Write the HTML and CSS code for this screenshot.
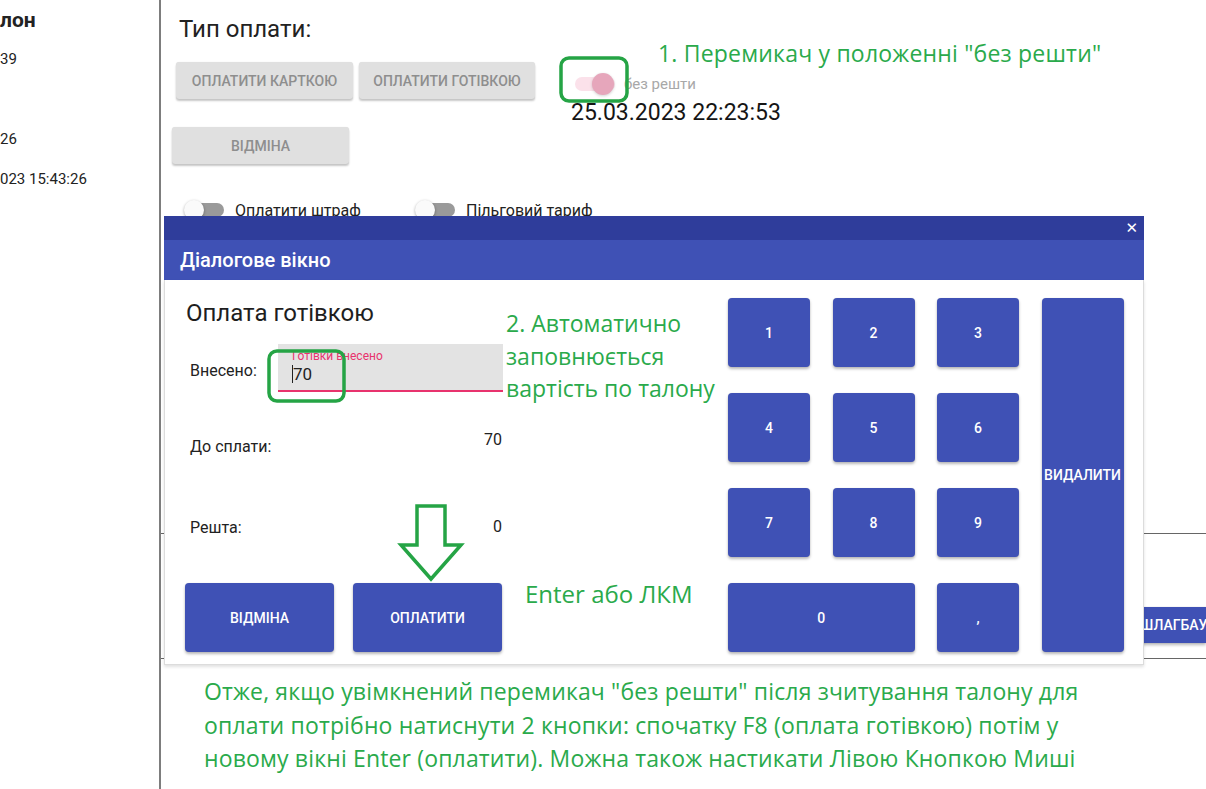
FILE: index.html
```html
<!DOCTYPE html>
<html lang="uk">
<head>
<meta charset="utf-8">
<title>Оплата готівкою</title>
<link rel="stylesheet" href="styles.css">
</head>
<body>
<div class="page">
  <aside class="sidebar">
    <div class="sb-head">лон</div>
    <div class="sb-item first">39</div>
    <div class="sb-item second">26</div>
    <div class="sb-item third">023 15:43:26</div>
  </aside>
  <main class="main">
    <h1 class="title">Тип оплати:</h1>
    <div class="pay-row">
      <button class="btn-gray card">Оплатити карткою</button>
      <button class="btn-gray cash">Оплатити готівкою</button>
      <div class="change-box">
        <div class="switch-row">
          <span class="switch on"><span class="track"></span><span class="thumb"></span></span>
          <span class="switch-label">без решти</span>
        </div>
        <div class="datetime">25.03.2023 22:23:53</div>
      </div>
    </div>
    <button class="btn-gray cancel">Відміна</button>
    <div class="toggles">
      <label class="toggle-item fine">
        <span class="switch"><span class="track"></span><span class="thumb"></span></span>
        <span class="toggle-text">Оплатити штраф</span>
      </label>
      <label class="toggle-item">
        <span class="switch"><span class="track"></span><span class="thumb"></span></span>
        <span class="toggle-text">Пільговий тариф</span>
      </label>
    </div>
    <div class="barrier">
      <button class="btn-blue barrier-btn">ШЛАГБАУ</button>
    </div>
  </main>
</div>

<div class="dialog">
  <div class="dialog-top"><span class="close">✕</span></div>
  <div class="dialog-header">Діалогове вікно</div>
  <div class="dialog-body">
    <div class="pay-col">
      <div class="pay-title">Оплата готівкою</div>
      <div class="field-row">
        <span class="row-label">Внесено:</span>
        <div class="field">
          <span class="field-label">Готівки внесено</span>
          <span class="field-value"><span class="caret"></span>70</span>
        </div>
      </div>
      <div class="amount-row due">
        <span class="row-label">До сплати:</span>
        <span class="amount">70</span>
      </div>
      <div class="amount-row rest">
        <span class="row-label">Решта:</span>
        <span class="amount">0</span>
      </div>
      <div class="action-row">
        <button class="btn-blue action">Відміна</button>
        <button class="btn-blue action">Оплатити</button>
      </div>
    </div>
    <div class="keypad">
      <button class="btn-blue key">1</button>
      <button class="btn-blue key">2</button>
      <button class="btn-blue key">3</button>
      <button class="btn-blue key del">ВИДАЛИТИ</button>
      <button class="btn-blue key">4</button>
      <button class="btn-blue key">5</button>
      <button class="btn-blue key">6</button>
      <button class="btn-blue key">7</button>
      <button class="btn-blue key">8</button>
      <button class="btn-blue key">9</button>
      <button class="btn-blue key zero">0</button>
      <button class="btn-blue key">,</button>
    </div>
  </div>
</div>

<svg class="marks" width="1206" height="789" viewBox="0 0 1206 789" aria-hidden="true">
  <rect x="561" y="58" width="66" height="43" rx="8" ry="8"/>
  <rect x="269" y="351" width="75" height="50" rx="8" ry="8"/>
  <path d="M417 506 H445 V545 H461 L431 579 L401 545 H417 Z"/>
</svg>

<div class="note note-1">1. Перемикач у положенні "без решти"</div>
<div class="note note-2">2. Автоматично<br>заповнюється<br>вартість по талону</div>
<div class="note note-3">Enter або ЛКМ</div>
<div class="note note-4">Отже, якщо увімкнений перемикач "без решти" після зчитування талону для<br>оплати потрібно натиснути 2 кнопки: спочатку F8 (оплата готівкою) потім у<br>новому вікні Enter (оплатити). Можна також настикати Лівою Кнопкою Миші</div>
</body>
</html>
```

FILE: styles.css
```css
* { box-sizing: border-box; }

html, body {
  margin: 0;
  padding: 0;
}

body {
  width: 1206px;
  height: 789px;
  overflow: hidden;
  position: relative;
  background: #fff;
  font-family: Roboto, "Liberation Sans", sans-serif;
  color: #212121;
}

button {
  font-family: Roboto, "Liberation Sans", sans-serif;
  border: none;
  cursor: pointer;
  text-transform: uppercase;
  padding: 0;
}

.page {
  display: flex;
  height: 789px;
}

/* sidebar */
.sidebar {
  width: 161px;
  flex: none;
  border-right: 2px solid #7d7d7d;
  overflow: hidden;
  font-size: 15px;
  color: #222;
}

.sb-head {
  font-size: 21px;
  font-weight: 700;
  line-height: 24px;
  margin-top: 8px;
}

.sb-item {
  line-height: 20px;
}

.sb-item.first { margin-top: 17px; }
.sb-item.second { margin-top: 60px; }
.sb-item.third { margin-top: 20px; }

/* main */
.main {
  flex: 1;
  display: flex;
  flex-direction: column;
  align-items: flex-start;
}

.title {
  margin: 15px 0 0 18px;
  font-size: 24px;
  font-weight: 400;
  line-height: 28px;
  color: #222;
}

.pay-row {
  display: flex;
  align-items: flex-start;
  margin-top: 19px;
  margin-left: 15px;
}

.btn-gray {
  height: 37px;
  background: #e0e0e0;
  color: #8e8e8e;
  font-size: 14px;
  font-weight: 500;
  border-radius: 3px;
  box-shadow: 0 2px 2px rgba(0, 0, 0, 0.22), 0 0 1px rgba(0, 0, 0, 0.12);
}

.btn-gray.card { width: 177px; }
.btn-gray.cash { width: 176px; margin-left: 6px; }

.change-box {
  margin-left: 36px;
  margin-top: 11px;
  display: flex;
  flex-direction: column;
}

.switch-row {
  display: flex;
  align-items: center;
  height: 22px;
  margin-left: 4px;
}

.switch {
  position: relative;
  display: inline-block;
  width: 40px;
  height: 22px;
  flex: none;
}

.switch .track {
  position: absolute;
  left: 6px;
  top: 4px;
  width: 34px;
  height: 14px;
  border-radius: 7px;
  background: #9a9a9a;
}

.switch .thumb {
  position: absolute;
  left: 0;
  top: 1px;
  width: 20px;
  height: 20px;
  border-radius: 50%;
  background: #fafafa;
  box-shadow: 0 1px 3px rgba(0, 0, 0, 0.35);
}

.switch.on .track {
  left: 0;
  width: 40px;
  background: #fbe1ea;
}

.switch.on .thumb {
  left: 17px;
  top: 0;
  width: 22px;
  height: 22px;
  background: #e6a6bb;
  box-shadow: 0 1px 3px rgba(0, 0, 0, 0.18);
}

.switch-label {
  margin-left: 9px;
  font-size: 15px;
  color: #a8a8a8;
}

.datetime {
  margin-top: 5px;
  font-size: 23px;
  line-height: 26px;
  color: #151515;
}

.btn-gray.cancel {
  width: 177px;
  margin-top: 1px;
  margin-left: 11px;
}

.toggles {
  display: flex;
  align-items: center;
  margin-top: 35px;
  margin-left: 23px;
}

.toggle-item {
  display: flex;
  align-items: center;
  font-size: 16px;
  color: #222;
}

.toggle-item.fine { width: 231px; }

.toggle-text { margin-left: 11px; }

.barrier {
  align-self: stretch;
  margin-top: 312px;
  padding: 73px 0 15px 0;
  border-top: 1px solid #666;
  border-bottom: 1px solid #666;
  display: flex;
  justify-content: flex-end;
}

.btn-blue {
  background: #3f51b5;
  color: #fff;
  font-weight: 500;
  font-size: 14px;
  border-radius: 4px;
  box-shadow: 0 2px 3px rgba(0, 0, 0, 0.28), 0 0 1px rgba(0, 0, 0, 0.15);
}

.barrier-btn {
  width: 71px;
  height: 36px;
  font-size: 14px;
  text-align: left;
  padding-left: 5px;
  border-radius: 0;
  overflow: hidden;
  white-space: nowrap;
}

/* dialog */
.dialog {
  position: absolute;
  left: 164px;
  top: 216px;
  width: 980px;
}

.dialog-top {
  height: 24px;
  background: #2f3d9b;
  display: flex;
  justify-content: flex-end;
  align-items: center;
  padding-right: 6px;
}

.close {
  color: #fff;
  font-size: 15px;
  font-weight: 700;
  font-family: "DejaVu Sans", sans-serif;
}

.dialog-header {
  height: 40px;
  background: #3f51b5;
  color: #fff;
  font-size: 20px;
  font-weight: 500;
  line-height: 40px;
  padding-left: 16px;
}

.dialog-body {
  height: 385px;
  background: #fff;
  border: 1px solid #dcdcdc;
  border-top: none;
  box-shadow: 0 2px 3px rgba(0, 0, 0, 0.12);
  display: flex;
  padding: 18px 0 0 20px;
}

.pay-col {
  width: 318px;
  height: 354px;
  display: flex;
  flex-direction: column;
}

.pay-title {
  margin-top: 1px;
  margin-left: 1px;
  font-size: 24px;
  line-height: 28px;
  color: #1e1e1e;
}

.row-label {
  font-size: 16px;
  line-height: 18px;
  color: #222;
  margin-left: 5px;
}

.field-row {
  display: flex;
  align-items: center;
  margin-top: 17px;
}

.field-row .row-label {
  width: 88px;
  margin-top: 6px;
}

.field {
  width: 225px;
  height: 48px;
  background: #e3e3e3;
  border-bottom: 2px solid #e8336d;
  display: flex;
  flex-direction: column;
  padding-left: 14px;
}

.field-label {
  margin-top: 5px;
  font-size: 12px;
  line-height: 14px;
  color: #e8336d;
}

.field-value {
  margin-top: 1px;
  font-size: 17px;
  line-height: 20px;
  color: #222;
  display: flex;
  align-items: center;
}

.caret {
  display: inline-block;
  width: 1px;
  height: 18px;
  background: #222;
}

.amount-row {
  display: flex;
  justify-content: space-between;
  align-items: flex-start;
}

.amount {
  font-size: 16px;
  line-height: 18px;
  color: #222;
  margin-right: 1px;
}

.amount-row.due { margin-top: 39px; }
.amount-row.due .row-label { margin-top: 7px; }
.amount-row.rest { margin-top: 62px; }
.amount-row.rest .row-label { margin-top: 1px; }

.action-row {
  margin-top: auto;
  display: flex;
  gap: 19px;
}

.btn-blue.action {
  width: 149px;
  height: 69px;
}

.keypad {
  margin-left: 225px;
  display: grid;
  grid-template-columns: repeat(4, 82px);
  grid-template-rows: repeat(4, 69px);
  column-gap: 22.5px;
  row-gap: 26px;
}

.key.del {
  grid-column: 4;
  grid-row: 1 / span 4;
}

.key.zero {
  grid-column: 1 / span 2;
}

/* annotations */
.marks {
  position: absolute;
  left: 0;
  top: 0;
  pointer-events: none;
  fill: none;
  stroke: #25a445;
  stroke-width: 3.5;
  stroke-linejoin: miter;
}

.note {
  position: absolute;
  font-family: "Open Sans", "Noto Sans", sans-serif;
  color: #2aaa4b;
  font-size: 23px;
  white-space: nowrap;
}

.note-1 { left: 658px; top: 37px; line-height: 32px; letter-spacing: 0.2px; }
.note-2 { left: 506px; top: 307px; line-height: 32.5px; }
.note-3 { left: 525px; top: 578px; line-height: 32px; font-size: 24px; }
.note-4 { left: 204px; top: 675px; line-height: 33.5px; letter-spacing: 0.15px; }
```
